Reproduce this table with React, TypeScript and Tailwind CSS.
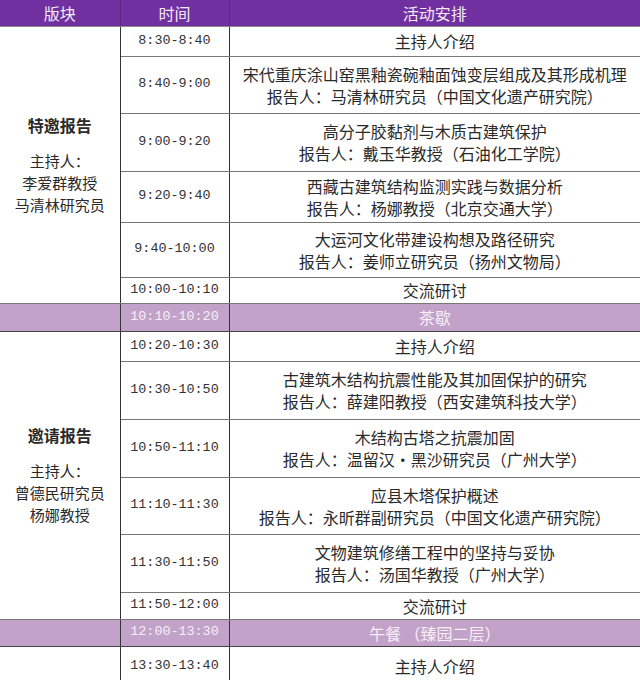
import React from "react";

type Slot = {
  time: string;
  lines: string[];
  h: number;
};

type Section = {
  title: string;
  hosts: string[];
  slots: Slot[];
};

type Break = { time: string; label: string; h: number };

const SECTIONS: { section: Section; after?: Break }[] = [
  {
    section: {
      title: "特邀报告",
      hosts: ["主持人：", "李爱群教授", "马清林研究员"],
      slots: [
        { time: "8:30-8:40", lines: ["主持人介绍"], h: 30 },
        {
          time: "8:40-9:00",
          lines: [
            "宋代重庆涂山窑黑釉瓷碗釉面蚀变层组成及其形成机理",
            "报告人：马清林研究员（中国文化遗产研究院）",
          ],
          h: 57,
        },
        {
          time: "9:00-9:20",
          lines: ["高分子胶黏剂与木质古建筑保护", "报告人：戴玉华教授（石油化工学院）"],
          h: 58,
        },
        {
          time: "9:20-9:40",
          lines: ["西藏古建筑结构监测实践与数据分析", "报告人：杨娜教授（北京交通大学）"],
          h: 51,
        },
        {
          time: "9:40-10:00",
          lines: ["大运河文化带建设构想及路径研究", "报告人：姜师立研究员（扬州文物局）"],
          h: 55,
        },
        { time: "10:00-10:10", lines: ["交流研讨"], h: 26 },
      ],
    },
    after: { time: "10:10-10:20", label: "茶歇", h: 28 },
  },
  {
    section: {
      title: "邀请报告",
      hosts: ["主持人：", "曾德民研究员", "杨娜教授"],
      slots: [
        { time: "10:20-10:30", lines: ["主持人介绍"], h: 30 },
        {
          time: "10:30-10:50",
          lines: [
            "古建筑木结构抗震性能及其加固保护的研究",
            "报告人：薛建阳教授（西安建筑科技大学）",
          ],
          h: 58,
        },
        {
          time: "10:50-11:10",
          lines: ["木结构古塔之抗震加固", "报告人：温留汉•黑沙研究员（广州大学）"],
          h: 58,
        },
        {
          time: "11:10-11:30",
          lines: ["应县木塔保护概述", "报告人：永昕群副研究员（中国文化遗产研究院）"],
          h: 57,
        },
        {
          time: "11:30-11:50",
          lines: ["文物建筑修缮工程中的坚持与妥协", "报告人：汤国华教授（广州大学）"],
          h: 58,
        },
        { time: "11:50-12:00", lines: ["交流研讨"], h: 27 },
      ],
    },
    after: { time: "12:00-13:30", label: "午餐 （臻园二层）", h: 27 },
  },
  {
    section: {
      title: "",
      hosts: [],
      slots: [{ time: "13:30-13:40", lines: ["主持人介绍"], h: 40 }],
    },
  },
];

const cell = "border-x border-x-[#333] border-y border-y-[#777] p-0 text-center align-middle";
const timeFont = "font-['Liberation_Mono',monospace] text-[13.4px]";

export default function App() {
  return (
    <div className="w-[640px] h-[680px] overflow-hidden bg-white font-['Noto_Sans_CJK_SC',sans-serif] text-[#2a2a2a]">
      <table className="w-[640px] border-collapse table-fixed">
        <colgroup>
          <col className="w-[120px]" />
          <col className="w-[109px]" />
          <col />
        </colgroup>
        <thead>
          <tr className="h-[26px] bg-[#7030a0] text-[16px] text-[#f4e8f6]">
            <th className="border-l-0 border-r border-r-[#5e2488] border-b border-b-[#888] font-normal">版块</th>
            <th className="border-x border-x-[#5e2488] border-b border-b-[#888] font-normal">时间</th>
            <th className="border-l border-l-[#5e2488] border-r-0 border-b border-b-[#888] font-normal">活动安排</th>
          </tr>
        </thead>
        <tbody>
          {SECTIONS.map(({ section, after }, si) => (
            <React.Fragment key={si}>
              {section.slots.map((slot, i) => (
                <tr key={slot.time} style={{ height: slot.h }}>
                  {i === 0 && (
                    <td rowSpan={section.slots.length} className={`${cell} border-l-0 border-y-[#444]`}>
                      {section.title && (
                        <div className="flex flex-col items-center text-[15px] leading-[22px]">
                          <span className="text-[16px] font-bold">{section.title}</span>
                          <span className="h-[14px]" />
                          {section.hosts.map((h) => (
                            <span key={h}>{h}</span>
                          ))}
                        </div>
                      )}
                    </td>
                  )}
                  <td className={`${cell} ${timeFont} text-[#333]`}>{slot.time}</td>
                  <td className={`${cell} border-r-0 text-[16px] leading-[22px]`}>
                    {slot.lines.map((l) => (
                      <div key={l} className="whitespace-nowrap">{l}</div>
                    ))}
                  </td>
                </tr>
              ))}
              {after && (
                <tr style={{ height: after.h }} className="bg-[#c3a2c9] text-[#f7eef8]">
                  <td className="border-x border-x-[#333] border-y border-y-[#444] border-l-0" />
                  <td className={`border-x border-x-[#333] border-y border-y-[#444] text-center ${timeFont}`}>
                    {after.time}
                  </td>
                  <td className="border-y border-y-[#444] border-l border-l-[#333] text-center text-[16px]">
                    {after.label}
                  </td>
                </tr>
              )}
            </React.Fragment>
          ))}
        </tbody>
      </table>
    </div>
  );
}
